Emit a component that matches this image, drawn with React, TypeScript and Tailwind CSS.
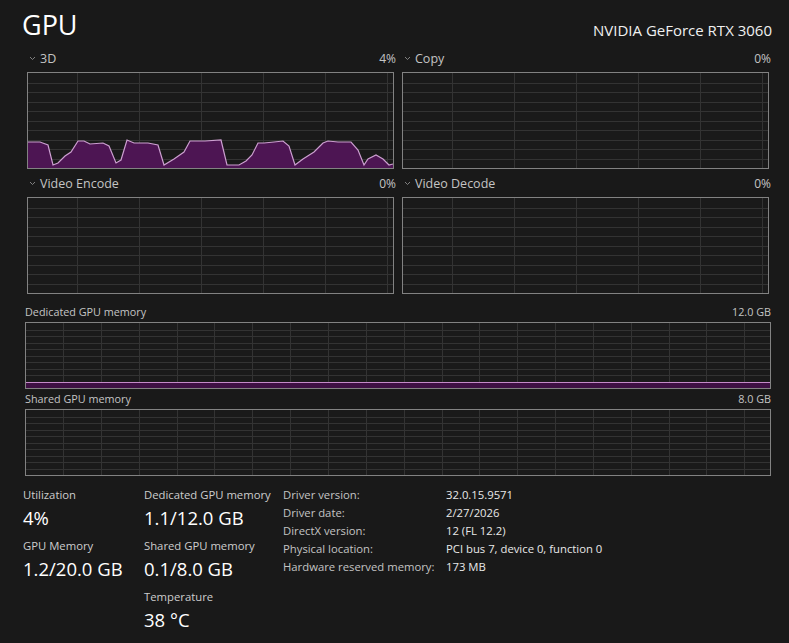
import React from 'react';

const font = { fontFamily: '"Open Sans", "Noto Sans", sans-serif' };

// points of the 3D usage trace, in inner-box coordinates
const usage3d: [number, number][] = [
  [0, 69], [12, 69], [20, 72], [25, 92], [30, 90], [37, 83], [43, 79], [50, 68], [56, 68], [62, 71],
  [75, 70], [81, 73], [88, 90], [93, 87], [99, 67], [106, 70], [120, 70], [130, 72], [136, 92],
  [146, 86], [156, 79], [162, 68], [177, 68], [193, 67], [199, 92], [211, 92], [218, 88], [224, 82],
  [230, 70], [236, 70], [246, 69], [255, 68], [261, 73], [267, 92], [275, 86], [286, 79], [295, 70],
  [300, 68], [310, 69], [323, 69], [330, 77], [336, 92], [340, 86], [348, 82], [355, 86], [361, 92], [365, 91],
];

function Chevron() {
  return (
    <svg width="7" height="5" viewBox="0 0 7 5" className="shrink-0">
      <polyline points="1,1 3.5,3.5 6,1" fill="none" stroke="#8c8c8c" strokeWidth="0.9" />
    </svg>
  );
}

function Grid({ w, h, rows, colStart, colStep }: { w: number; h: number; rows: number; colStart: number; colStep: number }) {
  const lines: React.ReactNode[] = [];
  for (let i = 1; i < rows; i++) {
    const y = Math.round((h * i) / rows) + 0.5;
    lines.push(<line key={'h' + i} x1={0} x2={w} y1={y} y2={y} stroke="#333333" strokeWidth="1" />);
  }
  for (let x = colStart, i = 0; x < w; x += colStep, i++) {
    const xx = Math.round(x) + 0.5;
    lines.push(<line key={'v' + i} x1={xx} x2={xx} y1={0} y2={h} stroke="#333333" strokeWidth="1" />);
  }
  return <>{lines}</>;
}

function SmallGraph({ label, value, data }: { label: string; value: string; data?: [number, number][] }) {
  const w = 365;
  const h = 95;
  return (
    <div className="w-[367px] flex flex-col">
      <div className="h-[17px] flex items-center -mr-[2px] text-[12.5px] leading-[17px] text-[#c4c4c4]">
        <div className="ml-[2px] mr-[4px] flex items-center">
          <Chevron />
        </div>
        <span className="flex-1">{label}</span>
        <span className="text-[12px]">{value}</span>
      </div>
      <div className="mt-[5px] w-[367px] h-[97px] border border-[#828282] bg-[#1a1a1a]">
        <svg width={w} height={h} className="block">
          <Grid w={w} h={h} rows={10} colStart={49} colStep={62} />
          {data && (
            <polygon
              points={[...data.map(([x, y]) => `${x},${y}`), `${w},${h}`, `0,${h}`].join(' ')}
              fill="#4d1553"
            />
          )}
          {data && (
            <polyline
              points={data.map(([x, y]) => `${x},${y}`).join(' ')}
              fill="none"
              stroke="#cc9fd0"
              strokeWidth="1.2"
            />
          )}
        </svg>
      </div>
    </div>
  );
}

function MemGraph({ label, value, level }: { label: string; value: string; level?: number }) {
  const w = 744;
  const h = 65;
  return (
    <div className="flex flex-col">
      <div className="flex justify-between text-[10.8px] leading-[16px] text-[#c4c4c4]">
        <span>{label}</span>
        <span>{value}</span>
      </div>
      <div className="mt-[2px] w-[746px] h-[67px] border border-[#828282] bg-[#1a1a1a]">
        <svg width={w} height={h} className="block">
          <Grid w={w} h={h} rows={10} colStart={37} colStep={37.85} />
          {level !== undefined && (
            <>
              <rect x={0} y={level} width={w} height={h - level} fill="#3e1043" />
              <line x1={0} x2={w} y1={level + 0.5} y2={level + 0.5} stroke="#c58ac9" strokeWidth="1.2" />
            </>
          )}
        </svg>
      </div>
    </div>
  );
}

function Stat({ label, value }: { label: string; value: string }) {
  return (
    <div className="flex flex-col">
      <span className="text-[11.3px] leading-[16px] text-[#cdcdcd]">{label}</span>
      <span className="mt-[3px] text-[18.5px] leading-[24px] text-white">{value}</span>
    </div>
  );
}

const details: [string, string][] = [
  ['Driver version:', '32.0.15.9571'],
  ['Driver date:', '2/27/2026'],
  ['DirectX version:', '12 (FL 12.2)'],
  ['Physical location:', 'PCI bus 7, device 0, function 0'],
  ['Hardware reserved memory:', '173 MB'],
];

export default function App() {
  return (
    <div className="w-[789px] h-[643px] bg-[#191919] text-white overflow-hidden" style={font}>
      <div className="h-[50px] flex justify-between">
        <h1 className="ml-[22px] mt-[11px] text-[27px] leading-[27px] font-normal text-white">GPU</h1>
        <span className="mr-[17px] mt-[23px] text-[15px] leading-[15px] text-[#f0f0f0]">NVIDIA GeForce RTX 3060</span>
      </div>

      <div className="pl-[27px] flex gap-[8px]">
        <SmallGraph label="3D" value="4%" data={usage3d} />
        <SmallGraph label="Copy" value="0%" />
      </div>
      <div className="pl-[27px] mt-[6px] flex gap-[8px]">
        <SmallGraph label="Video Encode" value="0%" />
        <SmallGraph label="Video Decode" value="0%" />
      </div>

      <div className="pl-[25px] mt-[10px] w-[771px] flex flex-col gap-[2px]">
        <MemGraph label="Dedicated GPU memory" value="12.0 GB" level={59} />
        <MemGraph label="Shared GPU memory" value="8.0 GB" />
      </div>

      <div className="mt-[11px] flex">
        <div className="ml-[23px] w-[121px] flex flex-col gap-[8px]">
          <Stat label="Utilization" value="4%" />
          <Stat label="GPU Memory" value="1.2/20.0 GB" />
        </div>
        <div className="w-[139px] flex flex-col gap-[8px]">
          <Stat label="Dedicated GPU memory" value="1.1/12.0 GB" />
          <Stat label="Shared GPU memory" value="0.1/8.0 GB" />
          <Stat label="Temperature" value="38 °C" />
        </div>
        <div className="-mt-[1px] flex flex-col text-[11.3px] leading-[18px]">
          {details.map(([k, v]) => (
            <div key={k} className="flex">
              <span className="w-[163px] text-[#c4c4c4]">{k}</span>
              <span className="text-[#e8e8e8]">{v}</span>
            </div>
          ))}
        </div>
      </div>
    </div>
  );
}
